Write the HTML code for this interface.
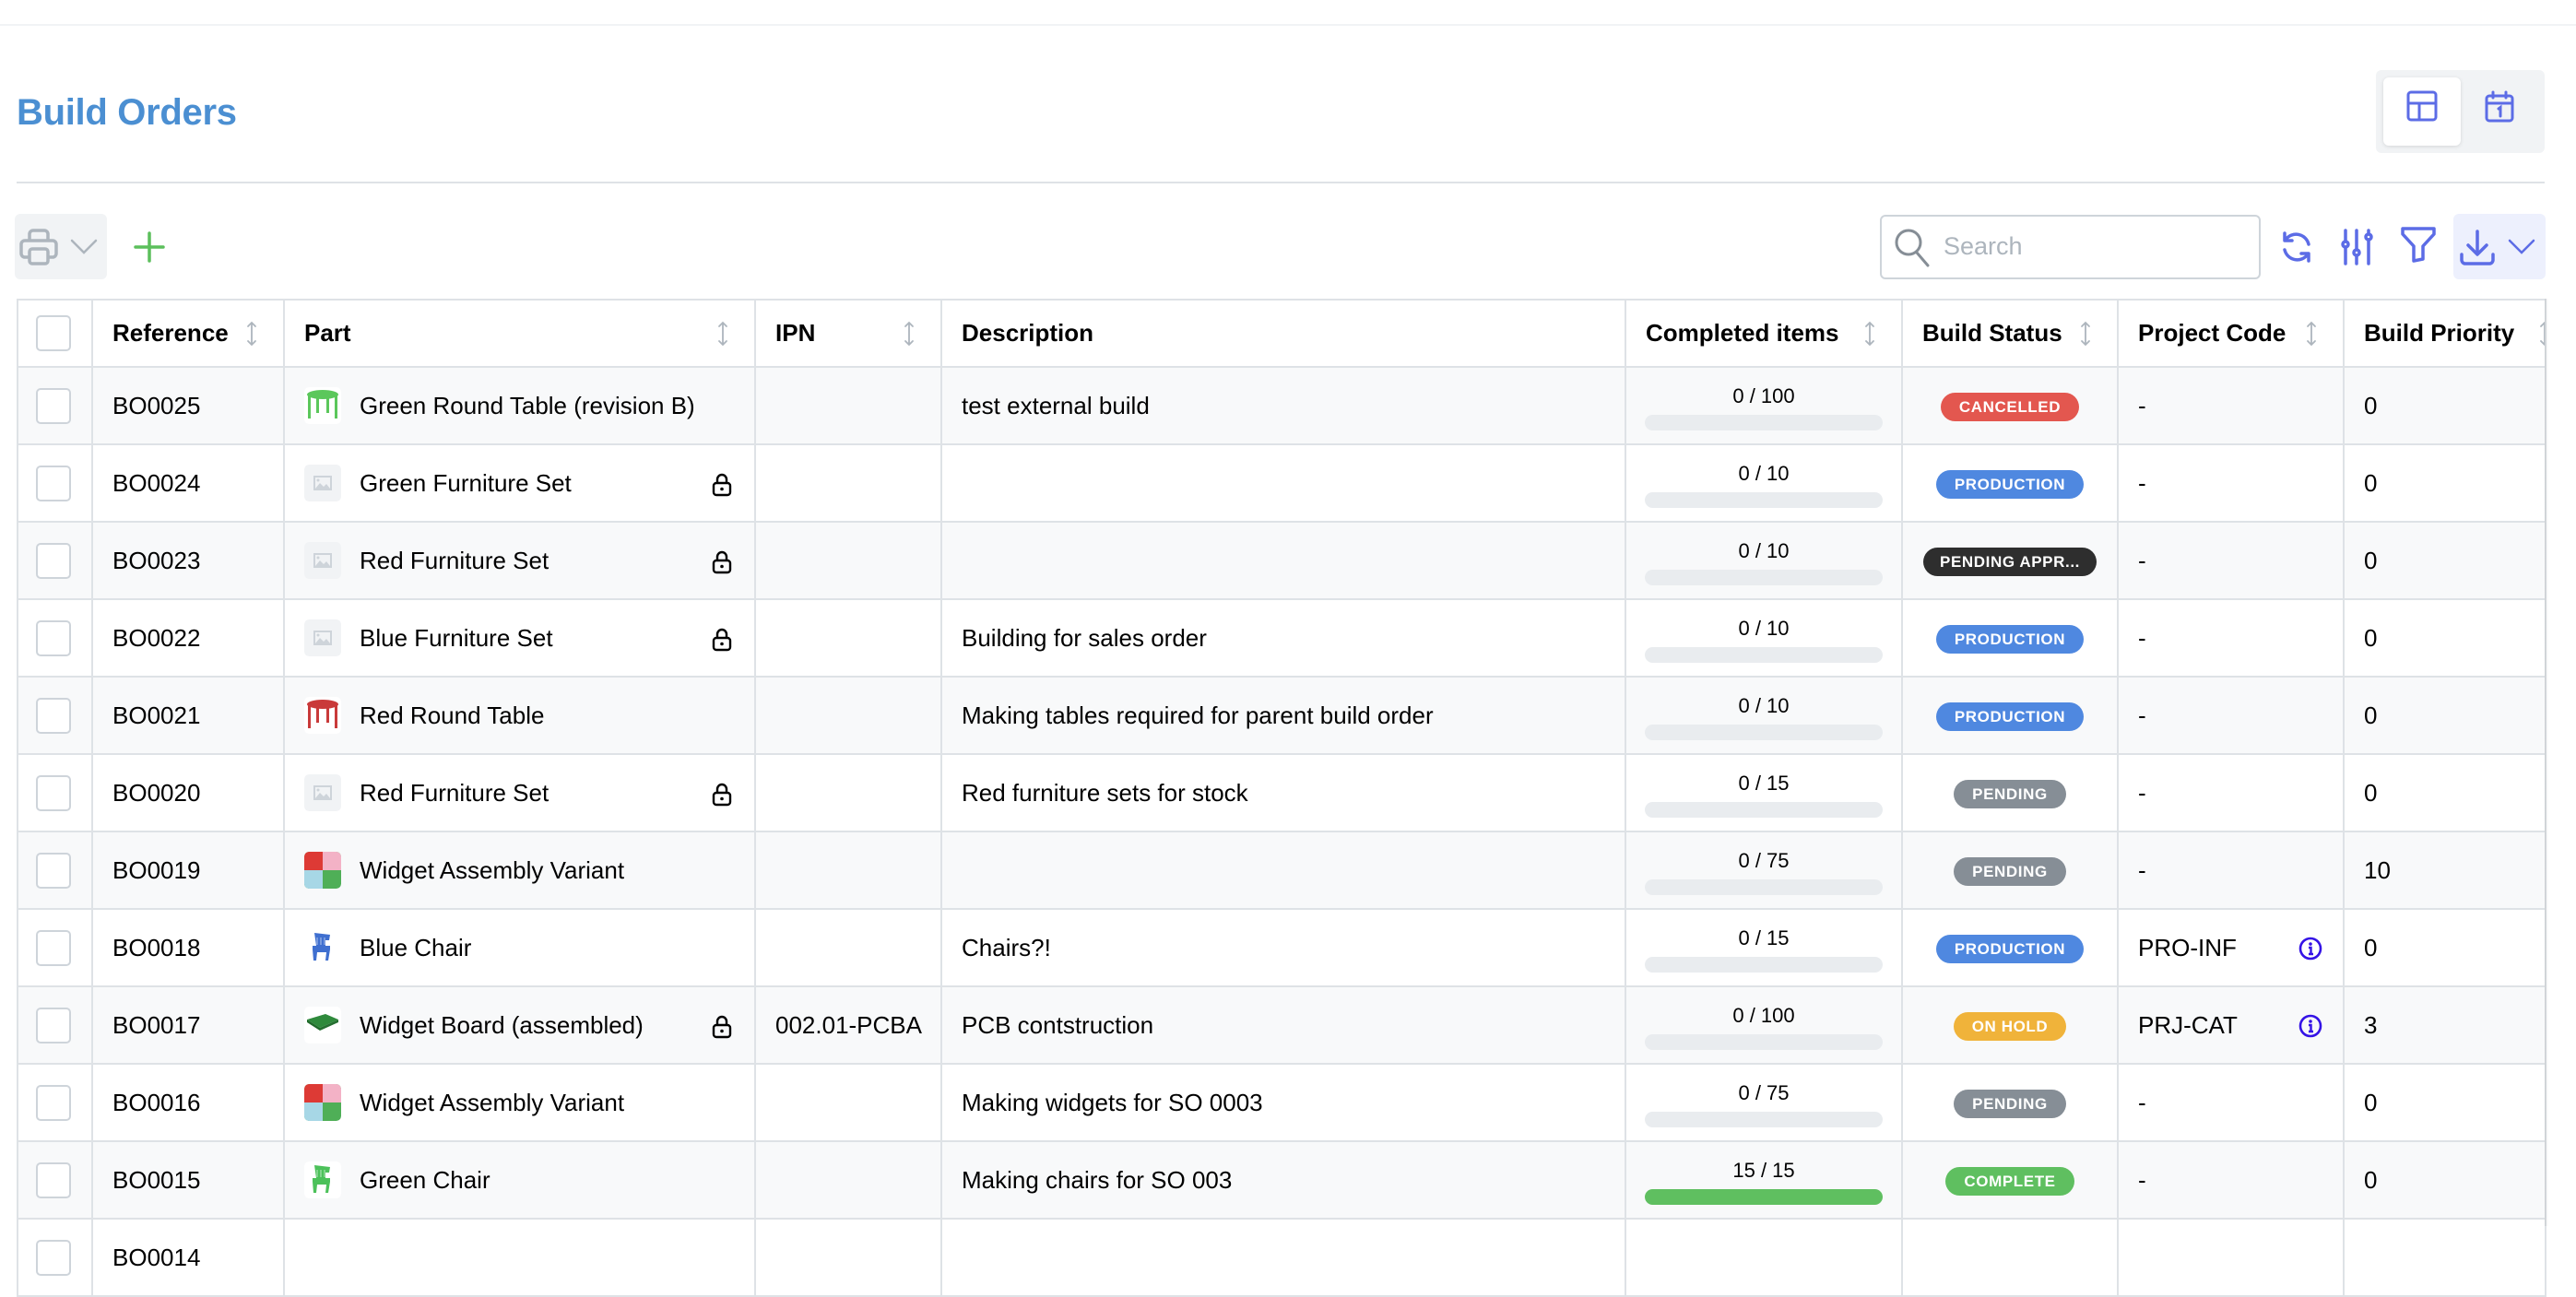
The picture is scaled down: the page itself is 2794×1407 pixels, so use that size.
<!DOCTYPE html>
<html><head><meta charset="utf-8">
<style>
*{box-sizing:border-box;margin:0;padding:0}
html,body{width:2794px;height:1330px;overflow:hidden;background:#fff;font-family:"Liberation Sans",Arial,sans-serif;color:#000}
.abs{position:absolute}
.topline{position:absolute;left:0;top:26px;width:2794px;height:2px;background:#f1f3f5}
.title{position:absolute;left:18px;top:100px;font-size:40px;font-weight:bold;color:#4b8fd2;letter-spacing:-0.3px}
.divider{position:absolute;left:18px;top:197px;width:2742px;height:2px;background:#dee2e6}
table{position:absolute;left:18px;top:324px;border-collapse:collapse;table-layout:fixed;width:2742px}
td,th{border:2px solid #dee2e6;padding:0 0 0 21px;font-size:26px;white-space:nowrap;overflow:hidden;vertical-align:middle;position:relative;text-align:left}
th{height:73px;font-weight:bold}
td{height:84px}
tr.g td{background:#f8f9fa}
.cb{display:block;width:38px;height:39px;border:2px solid #ced4da;border-radius:5px;background:#fff;margin-left:-2px}
.sort{position:absolute;right:28px;top:22px}
.part{display:flex;align-items:center}
.thumb{width:40px;height:40px;border-radius:5px;margin-right:20px;flex:none;display:block}
.lock{position:absolute;left:462px;top:30px}
.prog{text-align:center;padding:0 20px 0 20px}
.prog .t{font-size:22px;position:absolute;left:0;right:0;top:18px;text-align:center}
.prog .bar{position:absolute;left:20px;right:20px;top:51px;height:17px;border-radius:9px;background:#e9ecef}
.st{text-align:center;padding:0}
.b{display:inline-block;height:31px;line-height:31px;border-radius:16px;color:#fff;font-weight:bold;font-size:17px;padding:0 20px;letter-spacing:0.6px}
.prod{background:#4f88e0}.pend{background:#868e96}.canc{background:#e3574f}.appr{background:#2e2e2e;padding:0 18px}.hold{background:#f0b33a}.comp{background:#5fbf60}
.info{position:absolute;left:195px;top:29px}
</style></head><body>
<div class="topline"></div>
<div class="title">Build Orders</div>

<!-- view toggle -->
<div class="abs" style="left:2577px;top:76px;width:183px;height:90px;background:#f1f3f5;border-radius:6px"></div>
<div class="abs" style="left:2585px;top:84px;width:84px;height:74px;background:#fff;border-radius:6px;box-shadow:0 1px 4px rgba(0,0,0,.12)"></div>
<svg class="abs" style="left:2609px;top:97px" width="36" height="36" viewBox="0 0 36 36" fill="none" stroke="#5c6ce6" stroke-width="3"><rect x="3" y="3" width="30" height="30" rx="3"/><path d="M3 15H33M15 15V33"/></svg>
<svg class="abs" style="left:2693px;top:97px" width="36" height="36" viewBox="0 0 36 36" fill="none" stroke="#5c6ce6" stroke-width="3" stroke-linecap="round"><rect x="4" y="7" width="28" height="27" rx="3"/><path d="M4 15H32M11 3V9M25 3V9M17 21l2-1.5V29"/></svg>

<div class="divider"></div>

<!-- toolbar left -->
<div class="abs" style="left:16px;top:232px;width:100px;height:71px;background:#f1f3f5;border-radius:6px"></div>
<svg class="abs" style="left:20px;top:246px" width="44" height="44" viewBox="0 0 44 44" fill="none" stroke="#adb5bd" stroke-width="3.5" stroke-linejoin="round"><path d="M12 15V8a4 4 0 0 1 4-4h12a4 4 0 0 1 4 4v7"/><path d="M12 33H7a4 4 0 0 1-4-4V19a4 4 0 0 1 4-4h30a4 4 0 0 1 4 4v10a4 4 0 0 1-4 4h-5"/><rect x="12" y="24" width="20" height="16" rx="3"/></svg>
<svg class="abs" style="left:76px;top:258px" width="30" height="20" viewBox="0 0 30 20" fill="none" stroke="#adb5bd" stroke-width="2.5" stroke-linecap="round"><path d="M2 3l13 13 13-13"/></svg>
<svg class="abs" style="left:144px;top:250px" width="36" height="36" viewBox="0 0 36 36" fill="none" stroke="#5cbf5c" stroke-width="3.5" stroke-linecap="round"><path d="M18 3V33M3 18H33"/></svg>

<!-- search -->
<div class="abs" style="left:2039px;top:233px;width:413px;height:70px;border:2px solid #ced4da;border-radius:6px;background:#fff"></div>
<svg class="abs" style="left:2053px;top:246px" width="42" height="44" viewBox="0 0 42 44" fill="none" stroke="#868e96" stroke-width="3" stroke-linecap="round"><circle cx="17" cy="17" r="13"/><path d="M26 28l12 14"/></svg>
<div class="abs" style="left:2108px;top:252px;font-size:27px;color:#adb5bd">Search</div>

<!-- action icons -->
<svg class="abs" style="left:2471px;top:248px" width="40" height="40" viewBox="0 0 40 40" fill="none" stroke="#5c6ce6" stroke-width="3.5" stroke-linecap="round" stroke-linejoin="round"><path d="M33 17A14 14 0 0 0 8 12M7 5v8h8"/><path d="M7 23a14 14 0 0 0 25 5M33 35v-8h-8"/></svg>
<svg class="abs" style="left:2537px;top:248px" width="40" height="40" viewBox="0 0 40 40" fill="none" stroke="#5c6ce6" stroke-width="3.5" stroke-linecap="round"><path d="M7 2v12M7 20v18M19 2v21M19 29v9M32 2v4M32 12v26"/><circle cx="7" cy="17" r="3"/><circle cx="19" cy="26" r="3"/><circle cx="32" cy="9" r="3"/></svg>
<svg class="abs" style="left:2603px;top:245px" width="40" height="42" viewBox="0 0 40 42" fill="none" stroke="#5c6ce6" stroke-width="3.5" stroke-linejoin="round"><path d="M3 3h34v6L25 22v14l-10 2V22L3 9z"/></svg>
<div class="abs" style="left:2661px;top:232px;width:100px;height:71px;background:#edf0fd;border-radius:6px"></div>
<svg class="abs" style="left:2667px;top:248px" width="40" height="42" viewBox="0 0 40 42" fill="none" stroke="#5c6ce6" stroke-width="3.5" stroke-linecap="round" stroke-linejoin="round"><path d="M20 3v24M10 18l10 10 10-10M3 28v6a4 4 0 0 0 4 4h26a4 4 0 0 0 4-4v-6"/></svg>
<svg class="abs" style="left:2720px;top:258px" width="30" height="20" viewBox="0 0 30 20" fill="none" stroke="#5c6ce6" stroke-width="2.5" stroke-linecap="round"><path d="M2 3l13 13 13-13"/></svg>

<svg width="0" height="0" style="position:absolute">
<defs>
<g id="srt"><path d="M6 2v24M2 6l4-4 4 4M2 22l4 4 4-4" fill="none" stroke="#adb5bd" stroke-width="1.8" stroke-linecap="round"/></g>
<g id="img"><rect width="40" height="40" rx="5" fill="#f1f3f5"/><rect x="11" y="13" width="18" height="14" fill="none" stroke="#ced4da" stroke-width="2"/><path d="M12 26l5-6 4 4 3-3 4 5z" fill="#ced4da"/><circle cx="15" cy="17" r="1.5" fill="#ced4da"/></g>
<g id="lk"><rect x="3" y="11" width="18" height="13" rx="3" fill="none" stroke="#000" stroke-width="2.4"/><path d="M7 11V7a5 5 0 0 1 10 0v4" fill="none" stroke="#000" stroke-width="2.4"/><circle cx="12" cy="17.5" r="1.8"/></g>
<g id="var"><rect width="40" height="40" rx="5" fill="#4faf57"/><path d="M5 0h15v20H0V5a5 5 0 0 1 5-5z" fill="#dd3a35"/><path d="M20 0h15a5 5 0 0 1 5 5v15H20z" fill="#f3b2c6"/><path d="M0 20h20v20H5a5 5 0 0 1-5-5z" fill="#a7d7e6"/></g>
<g id="tbl"><rect width="40" height="40" rx="5" fill="#fff"/><ellipse cx="20" cy="8" rx="17" ry="5"/><rect x="4" y="9" width="3" height="25"/><rect x="33" y="9" width="3" height="25"/><rect x="13" y="11" width="3" height="17"/><rect x="24" y="11" width="3" height="17"/></g>
<g id="chr"><path d="M11 4l17 2-1 6-4 0v6h5v4l-2 12h-3l1-9h-10l-1 9h-3l-1-12v-4h4z"/><path d="M14 9v8M18 9v8M22 9v8" stroke="#fff" stroke-width="1.2" opacity=".5"/></g>
<g id="ic"><circle cx="13" cy="13" r="11" fill="none" stroke="#3412e6" stroke-width="2.6"/><circle cx="13" cy="8" r="1.8" fill="#3412e6"/><path d="M11 12h2.5v7M11 19h5" stroke="#3412e6" stroke-width="2.4" fill="none"/></g>
</defs></svg>

<table>
<colgroup><col style="width:81px"><col style="width:208px"><col style="width:511px"><col style="width:202px"><col style="width:742px"><col style="width:300px"><col style="width:234px"><col style="width:245px"><col style="width:219px"></colgroup>
<tr><th><span class="cb"></span></th>
<th>Reference<svg class="sort" width="12" height="28"><use href="#srt"/></svg></th>
<th>Part<svg class="sort" width="12" height="28"><use href="#srt"/></svg></th>
<th>IPN<svg class="sort" width="12" height="28"><use href="#srt"/></svg></th>
<th>Description</th>
<th>Completed items<svg class="sort" width="12" height="28"><use href="#srt"/></svg></th>
<th>Build Status<svg class="sort" width="12" height="28"><use href="#srt"/></svg></th>
<th>Project Code<svg class="sort" width="12" height="28"><use href="#srt"/></svg></th>
<th>Build Priority<svg class="sort" style="right:-6px" width="12" height="28"><use href="#srt"/></svg></th></tr>

<tr class="g"><td><span class="cb"></span></td><td>BO0025</td><td><div class="part"><svg class="thumb"><use href="#tbl" fill="#5bc75b"/></svg>Green Round Table (revision B)</div></td><td></td><td>test external build</td><td class="prog"><div class="t">0 / 100</div><div class="bar"></div></td><td class="st"><span class="b canc">CANCELLED</span></td><td>-</td><td>0</td></tr>

<tr><td><span class="cb"></span></td><td>BO0024</td><td><div class="part"><svg class="thumb"><use href="#img"/></svg>Green Furniture Set</div><svg class="lock" width="24" height="26"><use href="#lk"/></svg></td><td></td><td></td><td class="prog"><div class="t">0 / 10</div><div class="bar"></div></td><td class="st"><span class="b prod">PRODUCTION</span></td><td>-</td><td>0</td></tr>

<tr class="g"><td><span class="cb"></span></td><td>BO0023</td><td><div class="part"><svg class="thumb"><use href="#img"/></svg>Red Furniture Set</div><svg class="lock" width="24" height="26"><use href="#lk"/></svg></td><td></td><td></td><td class="prog"><div class="t">0 / 10</div><div class="bar"></div></td><td class="st"><span class="b appr">PENDING APPR...</span></td><td>-</td><td>0</td></tr>

<tr><td><span class="cb"></span></td><td>BO0022</td><td><div class="part"><svg class="thumb"><use href="#img"/></svg>Blue Furniture Set</div><svg class="lock" width="24" height="26"><use href="#lk"/></svg></td><td></td><td>Building for sales order</td><td class="prog"><div class="t">0 / 10</div><div class="bar"></div></td><td class="st"><span class="b prod">PRODUCTION</span></td><td>-</td><td>0</td></tr>

<tr class="g"><td><span class="cb"></span></td><td>BO0021</td><td><div class="part"><svg class="thumb"><use href="#tbl" fill="#c93a3a"/></svg>Red Round Table</div></td><td></td><td>Making tables required for parent build order</td><td class="prog"><div class="t">0 / 10</div><div class="bar"></div></td><td class="st"><span class="b prod">PRODUCTION</span></td><td>-</td><td>0</td></tr>

<tr><td><span class="cb"></span></td><td>BO0020</td><td><div class="part"><svg class="thumb"><use href="#img"/></svg>Red Furniture Set</div><svg class="lock" width="24" height="26"><use href="#lk"/></svg></td><td></td><td>Red furniture sets for stock</td><td class="prog"><div class="t">0 / 15</div><div class="bar"></div></td><td class="st"><span class="b pend">PENDING</span></td><td>-</td><td>0</td></tr>

<tr class="g"><td><span class="cb"></span></td><td>BO0019</td><td><div class="part"><svg class="thumb"><use href="#var"/></svg>Widget Assembly Variant</div></td><td></td><td></td><td class="prog"><div class="t">0 / 75</div><div class="bar"></div></td><td class="st"><span class="b pend">PENDING</span></td><td>-</td><td>10</td></tr>

<tr><td><span class="cb"></span></td><td>BO0018</td><td><div class="part"><svg class="thumb"><use href="#chr" fill="#3f6fd0"/></svg>Blue Chair</div></td><td></td><td>Chairs?!</td><td class="prog"><div class="t">0 / 15</div><div class="bar"></div></td><td class="st"><span class="b prod">PRODUCTION</span></td><td>PRO-INF<svg class="info" width="26" height="26"><use href="#ic"/></svg></td><td>0</td></tr>

<tr class="g"><td><span class="cb"></span></td><td>BO0017</td><td><div class="part"><svg class="thumb"><rect width="40" height="40" rx="5" fill="#fff"/><path d="M3 14l20-6 14 6-20 9z" fill="#2f8a3c"/><path d="M3 14l14 9v3L3 17z" fill="#1f6a2a"/><path d="M17 23l20-9v3l-20 9z" fill="#256f30"/></svg>Widget Board (assembled)</div><svg class="lock" width="24" height="26"><use href="#lk"/></svg></td><td>002.01-PCBA</td><td>PCB contstruction</td><td class="prog"><div class="t">0 / 100</div><div class="bar"></div></td><td class="st"><span class="b hold">ON HOLD</span></td><td>PRJ-CAT<svg class="info" width="26" height="26"><use href="#ic"/></svg></td><td>3</td></tr>

<tr><td><span class="cb"></span></td><td>BO0016</td><td><div class="part"><svg class="thumb"><use href="#var"/></svg>Widget Assembly Variant</div></td><td></td><td>Making widgets for SO 0003</td><td class="prog"><div class="t">0 / 75</div><div class="bar"></div></td><td class="st"><span class="b pend">PENDING</span></td><td>-</td><td>0</td></tr>

<tr class="g"><td><span class="cb"></span></td><td>BO0015</td><td><div class="part"><svg class="thumb"><rect width="40" height="40" rx="5" fill="#fff"/><use href="#chr" fill="#4cc15a"/></svg>Green Chair</div></td><td></td><td>Making chairs for SO 003</td><td class="prog"><div class="t">15 / 15</div><div class="bar" style="background:#5fbf60"></div></td><td class="st"><span class="b comp">COMPLETE</span></td><td>-</td><td>0</td></tr>

<tr><td><span class="cb"></span></td><td>BO0014</td><td></td><td></td><td></td><td></td><td></td><td></td><td></td></tr>
</table>
<div class="abs" style="left:2760px;top:324px;width:4px;height:1006px;background:linear-gradient(90deg,rgba(0,0,0,.08),rgba(0,0,0,0))"></div>
</body></html>
